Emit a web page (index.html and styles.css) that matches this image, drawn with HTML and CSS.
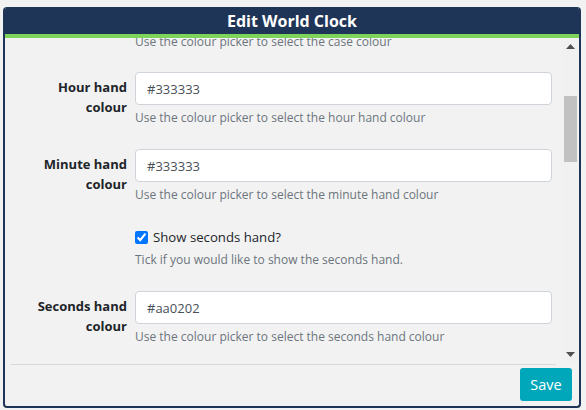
FILE: index.html
```html
<!DOCTYPE html>
<html>
<head>
<meta charset="utf-8">
<link rel="stylesheet" href="styles.css">
</head>
<body>
<div class="dialog">
  <div class="dialog-header">Edit World Clock</div>
  <div class="dialog-body">
    <div class="viewport">
      <form class="form">
        <div class="row">
          <label class="label">Case colour</label>
          <div class="field">
            <input class="input" type="text" value="#ffffff">
            <div class="help">Use the colour picker to select the case colour</div>
          </div>
        </div>
        <div class="row">
          <label class="label">Hour hand colour</label>
          <div class="field">
            <input class="input" type="text" value="#333333">
            <div class="help">Use the colour picker to select the hour hand colour</div>
          </div>
        </div>
        <div class="row">
          <label class="label">Minute hand colour</label>
          <div class="field">
            <input class="input" type="text" value="#333333">
            <div class="help">Use the colour picker to select the minute hand colour</div>
          </div>
        </div>
        <div class="row">
          <div class="label"></div>
          <div class="field">
            <label class="check"><input type="checkbox" checked><span>Show seconds hand?</span></label>
            <div class="help">Tick if you would like to show the seconds hand.</div>
          </div>
        </div>
        <div class="row">
          <label class="label">Seconds hand colour</label>
          <div class="field">
            <input class="input" type="text" value="#aa0202">
            <div class="help">Use the colour picker to select the seconds hand colour</div>
          </div>
        </div>
      </form>
    </div>
    <div class="scrollbar">
      <div class="sb-btn"><svg width="9" height="5" viewBox="0 0 9 5"><path d="M0 5 L4.5 0 L9 5 Z" fill="#505050"/></svg></div>
      <div class="sb-track"><div class="sb-thumb"></div></div>
      <div class="sb-btn"><svg width="9" height="5" viewBox="0 0 9 5"><path d="M0 0 L9 0 L4.5 5 Z" fill="#505050"/></svg></div>
    </div>
  </div>
  <div class="dialog-footer">
    <div class="divider"></div>
    <div class="actions"><button class="btn-save" type="button">Save</button></div>
  </div>
</div>
</body>
</html>
```

FILE: styles.css
```css
html, body {
  margin: 0;
  padding: 0;
  background: #f2f2f2;
}
body {
  padding: 7px 5px 0 3px;
  font-family: "Open Sans", "Liberation Sans", sans-serif;
}
.dialog {
  width: 578px;
  height: 401px;
  box-sizing: border-box;
  border: 2px solid #1f3557;
  border-top: 0;
  border-radius: 4px;
  background: #f2f2f2;
  display: flex;
  flex-direction: column;
  overflow: hidden;
}
.dialog-header {
  background: #1f3557;
  color: #ffffff;
  font-weight: 700;
  font-size: 16px;
  height: 27px;
  line-height: 28px;
  text-align: center;
  border-bottom: 4px solid #7ed45b;
  margin: 0 -2px;
}
.dialog-body {
  display: flex;
  height: 325px;
}
.viewport {
  flex: 1;
  overflow: hidden;
}
.form {
  margin: -42px 0 0 0;
  padding: 0 10px 0 6px;
}
.row {
  display: grid;
  grid-template-columns: 116px 1fr;
  column-gap: 8px;
  margin-bottom: 22px;
}
.row:first-child {
  margin-bottom: 21px;
}
.label {
  font-weight: 700;
  font-size: 13px;
  line-height: 20px;
  color: #212529;
  text-align: right;
  padding: 5px 0 0 16px;
}
.field {
  display: flex;
  flex-direction: column;
}
.input {
  box-sizing: border-box;
  height: 33px;
  border: 1px solid #ced4da;
  border-radius: 4px;
  background: #fff;
  padding: 0 11px;
  font-family: "Open Sans", "Liberation Sans", sans-serif;
  font-size: 13px;
  color: #495057;
  margin: 0;
}
.help {
  margin-top: 4px;
  font-size: 12px;
  line-height: 18px;
  color: #6c757d;
}
.check {
  display: flex;
  align-items: center;
  gap: 5px;
  font-size: 13.2px;
  line-height: 20px;
  color: #212529;
  padding-top: 1px;
}
.check input {
  width: 13px;
  height: 13px;
  margin: 0;
  accent-color: #0075ff;
}
.scrollbar {
  width: 17px;
  display: flex;
  flex-direction: column;
  background: #f1f1f1;
}
.sb-btn {
  height: 17px;
  display: flex;
  align-items: center;
  justify-content: center;
}
.sb-track {
  flex: 1;
  padding: 41px 2px 0 2px;
}
.sb-thumb {
  height: 66px;
  background: #c1c1c1;
}
.dialog-footer {
  flex: 1;
  display: flex;
  flex-direction: column;
}
.divider {
  height: 1px;
  background: #d9d9d9;
  margin: 1px 23px 0 6px;
}
.actions {
  display: flex;
  justify-content: flex-end;
  padding: 3px 7px 0 0;
}
.btn-save {
  width: 52px;
  height: 33px;
  border: 0;
  border-radius: 3px;
  background: #00a7ba;
  color: #fff;
  font-family: "Open Sans", "Liberation Sans", sans-serif;
  font-size: 14.5px;
  padding: 0;
}
```
